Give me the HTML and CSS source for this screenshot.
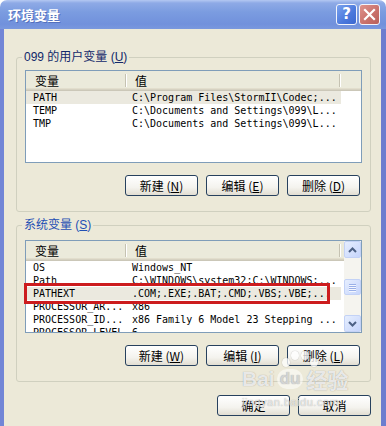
FILE: index.html
```html
<!DOCTYPE html>
<html lang="zh-CN">
<head>
  <meta charset="UTF-8" />
  <title>环境变量</title>
  <link rel="stylesheet" href="styles.css">
</head>
<body>

  <div class="window">

    <div class="titlebar">
      <span class="title">环境变量</span>
      <div class="ctl">
        <span class="cbtn help">?</span>
        <span class="cbtn close">
          <svg width="13" height="13" viewBox="0 0 13 13"><path d="M2 2L11 11M11 2L2 11" stroke="#fff" stroke-width="2.2" stroke-linecap="square"/></svg>
        </span>
      </div>
    </div>

    <div class="frame">
      <div class="body">

        <!-- user variables -->
        <div class="group">
          <div class="legend user">099 的用户变量 (<u>U</u>)</div>
          <div class="list">
            <div class="list-main">
              <div class="lhead">
                <div class="hc1">变量</div>
                <span class="sep"></span>
                <div class="hc2">值</div>
                <span class="sep"></span>
              </div>
              <div class="row sel"><span class="c1">PATH</span><span class="c2">C:\Program Files\StormII\Codec;...</span></div>
              <div class="row"><span class="c1">TEMP</span><span class="c2">C:\Documents and Settings\099\L...</span></div>
              <div class="row"><span class="c1">TMP</span><span class="c2">C:\Documents and Settings\099\L...</span></div>
            </div>
          </div>
          <div class="btns">
            <button class="btn">新建 (<u>N</u>)</button>
            <button class="btn">编辑 (<u>E</u>)</button>
            <button class="btn">删除 (<u>D</u>)</button>
          </div>
        </div>

        <!-- system variables -->
        <div class="group sys">
          <div class="legend">系统变量 (<u>S</u>)</div>
          <div class="list-wrap">
            <div class="list">
              <div class="list-main">
                <div class="lhead">
                  <div class="hc1">变量</div>
                  <span class="sep"></span>
                  <div class="hc2">值</div>
                  <span class="sep"></span>
                </div>
                <div class="row"><span class="c1">OS</span><span class="c2">Windows_NT</span></div>
                <div class="row"><span class="c1">Path</span><span class="c2">C:\WINDOWS\system32;C:\WINDOWS;...</span></div>
                <div class="row sel"><span class="c1">PATHEXT</span><span class="c2">.COM;.EXE;.BAT;.CMD;.VBS;.VBE;...</span></div>
                <div class="row"><span class="c1">PROCESSOR_AR...</span><span class="c2">x86</span></div>
                <div class="row"><span class="c1">PROCESSOR_ID...</span><span class="c2">x86 Family 6 Model 23 Stepping ...</span></div>
                <div class="row"><span class="c1">PROCESSOR_LEVEL</span><span class="c2">6</span></div>
              </div>
              <div class="sbar">
                <span class="sbtn">
                  <svg width="9" height="6" viewBox="0 0 9 6"><path d="M1 5L4.5 1.5L8 5" fill="none" stroke="#4d6185" stroke-width="2"/></svg>
                </span>
                <span class="thumb"><i></i><i></i><i></i><i></i></span>
                <span class="sbtn down">
                  <svg width="9" height="6" viewBox="0 0 9 6"><path d="M1 1L4.5 4.5L8 1" fill="none" stroke="#4d6185" stroke-width="2"/></svg>
                </span>
              </div>
            </div>
            <div class="mark"></div>
          </div>
          <div class="btns">
            <button class="btn">新建 (<u>W</u>)</button>
            <button class="btn">编辑 (<u>I</u>)</button>
            <button class="btn">删除 (<u>L</u>)</button>
          </div>
        </div>

        <div class="footer">
          <button class="btn">确定</button>
          <button class="btn">取消</button>
        </div>

      </div>
    </div>

    <div class="watermark">
      <div class="paw"><i></i><i></i><i></i><i></i></div>
      <div class="wm-big">Bai<span class="du">du</span>经验</div>
      <div class="wm-small">jingyan.baidu.com</div>
    </div>

  </div>

</body>
</html>
```

FILE: styles.css
```css
body {
  margin: 0;
  background: #fff;
  font-family: "Liberation Sans", "Noto Sans CJK SC", sans-serif;
  font-size: 12px;
  color: #000;
}
.window {
  position: relative;
  width: 386px;
  height: 426px;
  overflow: hidden;
  display: flex;
  flex-direction: column;
}
.titlebar {
  height: 29px;
  flex-shrink: 0;
  box-sizing: border-box;
  display: flex;
  align-items: center;
  justify-content: space-between;
  padding: 0 6px 1px 8px;
  border-radius: 7px 7px 0 0;
  background: linear-gradient(#b4c8f2 0, #8eaae6 3px, #7b9ce0 12px, #7191dc 24px, #7a98de 29px);
}
.title {
  color: #fff;
  font-weight: bold;
  font-size: 13px;
  font-family: "Noto Sans CJK SC", sans-serif;
  text-shadow: 1px 1px 0 #5470bc;
}
.ctl {
  display: flex;
  gap: 2px;
}
.cbtn {
  width: 21px;
  height: 21px;
  box-sizing: border-box;
  border: 1px solid #f2f4fb;
  border-radius: 3px;
  display: flex;
  align-items: center;
  justify-content: center;
  color: #fff;
  font-weight: bold;
  font-size: 15px;
  font-family: "DejaVu Sans", sans-serif;
}
.help {
  background: linear-gradient(135deg, #7aa2ee, #4a78dc 60%, #3c68d0);
}
.close {
  background: linear-gradient(135deg, #df938c, #c8706a 60%, #b9605a);
}
.frame {
  flex: 1;
  display: flex;
  border-left: 4px solid #7286d6;
  border-right: 5px solid #6c7dcf;
  background: #ece9d8;
}
.body {
  flex: 1;
  padding: 28px 10px 0 12px;
}
.group {
  border: 1px solid #d0d0bf;
  border-radius: 3px;
  padding: 0 8px 15px;
}
.group.sys {
  margin-top: 13px;
}
.legend {
  width: fit-content;
  height: 13px;
  line-height: 13px;
  margin: -7px 0 0 -3px;
  padding: 0 2px;
  background: #ece9d8;
  color: #1f4fb4;
}
.legend.user {
  color: #12286a;
}
.list {
  height: 93px;
  margin-top: 6px;
  box-sizing: border-box;
  border: 1px solid #7f9db9;
  background: #fff;
  display: flex;
  overflow: hidden;
}
.list-wrap {
  position: relative;
  margin-top: 8px;
}
.list-wrap .list {
  margin-top: 0;
}
.list-main {
  flex: 1;
  overflow: hidden;
}
.lhead {
  height: 20px;
  box-sizing: border-box;
  display: flex;
  align-items: center;
  padding-bottom: 2px;
  background: #ebeadb;
  box-shadow: inset 0 -1px #cbc7b8, inset 0 -2px #d6d2c2, inset 0 -3px #e2decd;
  font-family: "Noto Sans CJK SC", sans-serif;
}
.hc1 {
  width: 90px;
  padding-left: 9px;
}
.hc2 {
  width: 204px;
  padding-left: 9px;
}
.sep {
  width: 1px;
  height: 13px;
  background: #c5c2b2;
  box-shadow: 1px 0 #fff;
}
.row {
  width: 315px;
  height: 13px;
  line-height: 13px;
  display: flex;
  font-family: "DejaVu Sans Mono", monospace;
  font-size: 10px;
  white-space: nowrap;
}
.row.sel {
  background: #ebe9df;
}
.c1 {
  width: 93px;
  padding-left: 7px;
  overflow: hidden;
}
.c2 {
  padding-left: 6px;
}
.sbar {
  width: 17px;
  flex-shrink: 0;
  display: flex;
  flex-direction: column;
  background: #f5f4ef;
}
.sbtn, .thumb {
  height: 17px;
  box-sizing: border-box;
  border: 1px solid #c3d2f6;
  border-radius: 2px;
  background: linear-gradient(135deg, #e6eefe, #c6d5fc);
  display: flex;
  align-items: center;
  justify-content: center;
}
.thumb {
  height: 16px;
  margin-top: 21px;
  flex-direction: column;
  gap: 1px;
}
.thumb i {
  width: 7px;
  height: 1px;
  background: #9ab0e8;
  box-shadow: 0 1px #f4f7ff;
}
.sbtn.down {
  margin-top: auto;
}
.mark {
  position: absolute;
  left: -1px;
  top: 43px;
  width: 306px;
  height: 21px;
  box-sizing: border-box;
  border: 3px solid #cc1c1e;
}
.btns, .footer {
  display: flex;
  justify-content: flex-end;
  gap: 8px;
  margin-top: 12px;
}
.btns {
  padding-right: 2px;
}
.footer {
  margin-top: 13px;
}
.btn {
  width: 73px;
  height: 21px;
  box-sizing: border-box;
  padding: 0;
  border: 1px solid #27415e;
  border-radius: 3px;
  background: linear-gradient(#ffffff, #f4f3ee 60%, #e2ded2);
  color: #000;
  font-family: "Noto Sans CJK SC", sans-serif;
  font-size: 12px;
  line-height: 17px;
}
.watermark {
  position: absolute;
  left: 242px;
  top: 350px;
  width: 118px;
  color: rgba(255, 255, 255, 0.8);
  text-shadow: 0 0 1px rgba(110, 110, 110, 0.7);
}
.paw {
  position: relative;
  height: 18px;
  margin-left: 40px;
}
.paw i {
  position: absolute;
  width: 8px;
  height: 9px;
  border-radius: 50%;
  background: rgba(255, 255, 255, 0.75);
  box-shadow: 0 0 1px rgba(110, 110, 110, 0.7);
}
.paw i:nth-child(1) { left: 0; top: 8px; }
.paw i:nth-child(2) { left: 9px; top: 1px; }
.paw i:nth-child(3) { left: 19px; top: 1px; }
.paw i:nth-child(4) { left: 28px; top: 8px; }
.wm-big {
  display: flex;
  align-items: center;
  height: 22px;
  font-family: "Liberation Sans", "Noto Sans CJK SC", sans-serif;
  font-weight: bold;
  font-size: 21px;
}
.du {
  margin: 0 3px 0 2px;
  padding: 0 3px;
  border-radius: 10px;
  background: rgba(255, 255, 255, 0.55);
  color: rgba(220, 220, 220, 0.9);
  font-size: 17px;
}
.wm-small {
  margin-top: 6px;
  font-size: 11px;
  letter-spacing: 0.5px;
  color: rgba(255, 255, 255, 0.7);
}
```
